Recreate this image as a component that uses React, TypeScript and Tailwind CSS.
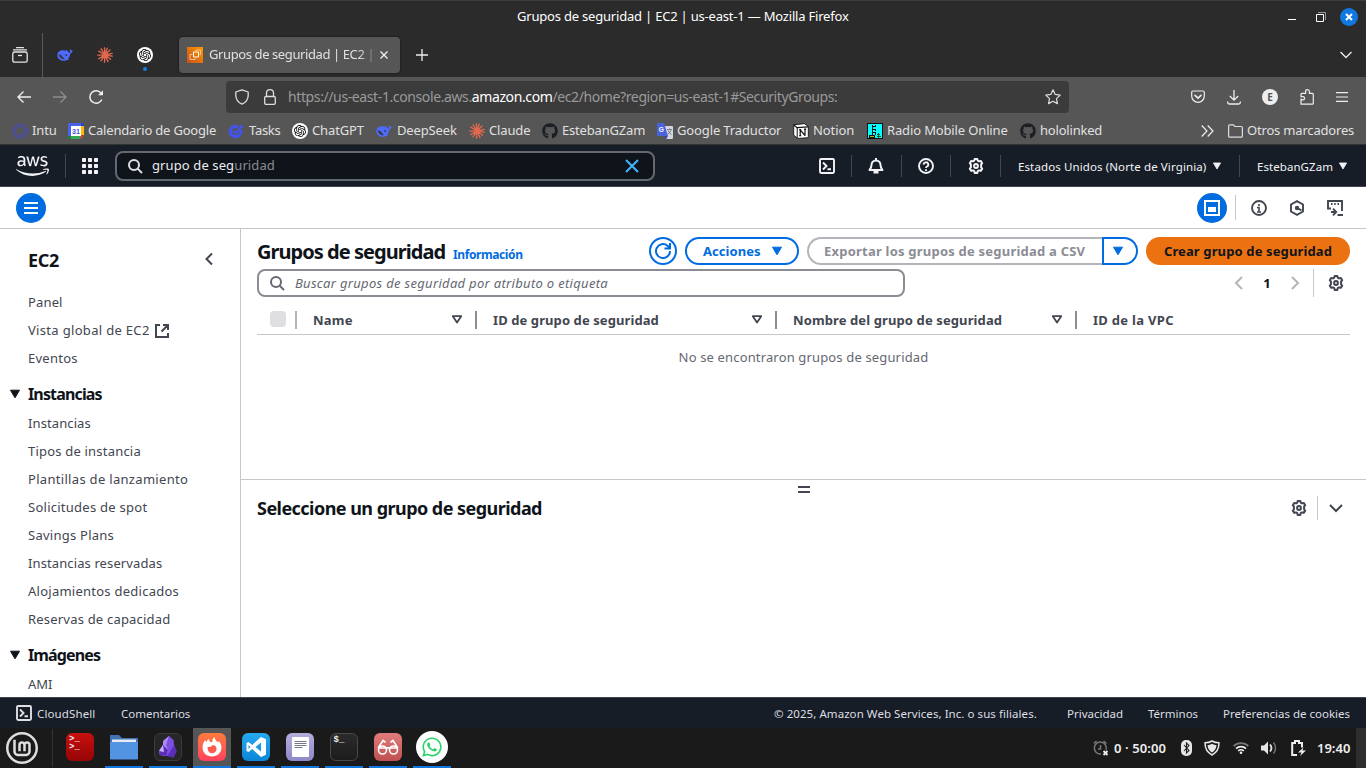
import React from 'react';
import { FaAws, FaGithub, FaWhatsapp } from 'react-icons/fa';
import { SiOpenai, SiLinuxmint } from 'react-icons/si';

type P = { className?: string };

const Whale = ({ className = '' }: P) => (
  <svg className={className} viewBox="0 0 16 16" fill="#4d6bfe">
    <path d="M15.6 3.2c-.7.5-1.300.3-1.800-.1-.5-.4-.6-1-.7-1.100-.4.400-.5 1.100-.3 1.900.2.700.5 1.200 1 1.600-.5.300-1 .3-1.500.1C10.900 4.500 9.700 2.900 8.700 2.800c-.2.400-.1.900.2 1.400-1-.7-2.500-1.200-4.300-.9C1.800 3.800.200 5.800.3 8.200c.2 3.300 2.800 5.400 5.900 5.600 1.500.100 2.600-.3 3.500-.9.9.3 1.700.2 2.100 0-.1-.4-.5-.7-1-.9 1.700-1.600 2.400-3.600 2.500-5.500 1.400-.2 2.300-1.400 2.300-3.300z" />
    <path d="M1.700 7.200c2.400 0 3.400 1.700 4.700 3.300.8 1 1.500 1.200 1.500 1.400-2.300.9-5.700-.7-6.200-4.700zM7.900 7c1.300-.4 2.400.5 2.500 2-.8.300-1.700-.1-2-.8-.2-.4-.2-.8-.5-1.200z" fill="#3b3b46" />
  </svg>
);

const Burst = ({ className = '' }: P) => (
  <svg className={className} viewBox="0 0 16 16" stroke="#e0694e" strokeWidth="1.35" strokeLinecap="round">
    <path d="M8 8L7.400.8M8 8l2.200-6.800M8 8l5-5M8 8l7.200-1.600M8 8l7.200 1.200M8 8l5.600 4.200M8 8l3 6.600M8 8l-.5 7.200M8 8l-4 5.800M8 8l-6.200 3.600M8 8L.8 8.200M8 8L1.800 4.200M8 8L4.200 1.800" />
  </svg>
);

const Ring = ({ className = '' }: P) => (
  <svg className={className} viewBox="0 0 16 16" fill="none" stroke="#4a4acb">
    <circle cx="8" cy="8" r="6.300" strokeWidth="3" strokeDasharray="0.9 1.080" />
    <circle cx="8" cy="8" r="4.500" strokeWidth=".6" />
  </svg>
);

const Calendar = ({ className = '' }: P) => (
  <svg className={className} viewBox="0 0 16 16">
    <path fill="#4a63e8" d="M0 1.500Q0 0 1.500 0H13v3H3v10H0z" />
    <path fill="#2846c8" d="M13 0h1.500Q16 0 16 1.500V3h-3z" />
    <path fill="#fbbc04" d="M13 3h3v9h-3z" />
    <path fill="#34a853" d="M3 13h9.500v3H3z" />
    <path fill="#188038" d="M0 13h3v3H1.500Q0 16 0 14.500z" />
    <path fill="#ea4335" d="M12.500 12.500H16L12.500 16z" />
    <path fill="#fff" d="M3 3h10v10H3z" />
    <text x="8" y="10.600" textAnchor="middle" fontFamily="Liberation Sans" fontWeight="700" fontSize="7" fill="#3c50e0">31</text>
  </svg>
);

const Tasks = ({ className = '' }: P) => (
  <svg className={className} viewBox="0 0 16 16" fill="none">
    <circle cx="7.500" cy="8.500" r="5.200" stroke="#4353f0" strokeWidth="3.200" />
    <path d="M9 8l5.500-6" stroke="#565656" strokeWidth="3.400" />
    <path d="M5 7.800l2.500 2.500L13 4" stroke="#4353f0" strokeWidth="2" />
    <circle cx="13.300" cy="3.400" r="1.600" fill="#4353f0" />
  </svg>
);

const Gpt = ({ className = '' }: P) => (
  <span className={`flex items-center justify-center rounded-full bg-white text-black ${className}`}>
    <SiOpenai size={12} />
  </span>
);

const Translate = ({ className = '' }: P) => (
  <svg className={className} viewBox="0 0 16 16">
    <path fill="#d5d7dc" d="M7 3h8q1 0 1 1v11q0 1-1 1H9.500z" />
    <path fill="#4a63dc" d="M1 0h6l4 13H1q-1 0-1-1V1q0-1 1-1z" />
    <path fill="#3a3fc0" d="M7.500 13H11l-2 3z" />
    <text x="1.800" y="8.700" fontFamily="Liberation Sans" fontWeight="700" fontSize="6.500" fill="#fff">G</text>
    <path stroke="#6d7a87" strokeWidth=".9" fill="none" d="M10 6.500h5M12.500 5.500v1M14 6.500q-.5 3-3.500 5M11 7.500q1 2.500 3.500 4" />
  </svg>
);

const Notion = ({ className = '' }: P) => (
  <svg className={className} viewBox="0 0 16 16">
    <path fill="#fff" stroke="#111" strokeWidth=".9" d="M.7 1.700L11.500.700l3.800 2.700v10.300q0 1-1 1.100l-9.800.600L.7 12z" />
    <path d="M.9 2l3.200 2.600 11-.8" stroke="#111" strokeWidth="1.200" fill="none" />
    <path d="M4.200 4.500v10.600" stroke="#111" strokeWidth="1" />
    <path d="M7.200 12.800V6.800M7 6.700l5 5.800M12 6.200v6.500M6.200 6.600h2M11 6.200h2.200M6.200 12.700h2" stroke="#111" strokeWidth="1.200" fill="none" />
  </svg>
);

const Radio = ({ className = '' }: P) => (
  <svg className={className} viewBox="0 0 16 16" shapeRendering="crispEdges">
    <path fill="#111" d="M0 0h16v16H0z" />
    <path fill="#0ff" d="M1 1h14v14H1z" />
    <path d="M5.500 2v10M8.500 2v2M8.500 6v2M8.500 9v3M5 3.500h4M5 6.500h4M5 9.500h4" stroke="#111" fill="none" />
    <path d="M2.500 12.500h5v2h-5z" fill="#c8b820" stroke="#111" />
    <path d="M11.500 10v5M10 11.500h3M10 13.500h4" stroke="#175c17" />
  </svg>
);

const Git = ({ className = '' }: P) => <FaGithub className={`text-[#1b1f23] ${className}`} />;

const Gear = ({ className = '', sw = 2 }: P & { sw?: number }) => (
  <svg className={className} viewBox="0 0 16 16" fill="none" stroke="currentColor" strokeWidth={sw} strokeLinejoin="round">
    <path d="M6.300 2.600L6.700 1h2.600l.4 1.600 1.300.8 1.700-.5 1.500 2.300-1.100 1.300v2.800l1.100 1.300-1.500 2.300-1.700-.5-1.300.8L9.300 15H6.700l-.4-1.800-1.300-.8-1.700.5-1.500-2.300 1.100-1.300V6.500L1.800 5.200l1.500-2.300 1.700.5z" />
    <circle cx="8" cy="8" r="1.900" />
  </svg>
);

const Search = ({ className = '' }: P) => (
  <svg className={className} viewBox="0 0 16 16" fill="none" stroke="currentColor" strokeWidth="2">
    <circle cx="7" cy="7" r="5" />
    <path d="M10.600 10.600L15 15" />
  </svg>
);

const Shell = ({ className = '' }: P) => (
  <svg className={className} viewBox="0 0 16 16" fill="none" stroke="currentColor" strokeWidth="1.900">
    <rect x="1" y="1" width="14" height="14" rx="1.200" />
    <path d="M4 4.500L7.500 8 4 11.500M8.500 11.300H12" />
  </svg>
);

const Tri = ({ className = '' }: P) => (
  <svg className={className} viewBox="0 0 12 10" fill="currentColor" stroke="currentColor" strokeLinejoin="round">
    <path d="M1.500 1.200h9L6 8.800z" />
  </svg>
);

const Chevron = ({ className = '', d = 'M11 2L5 8l6 6' }: P & { d?: string }) => (
  <svg className={className} viewBox="0 0 16 16" fill="none" stroke="currentColor" strokeWidth="2">
    <path d={d} />
  </svg>
);

const bookmarks: { label: string; w: string; t: string; Icon: React.ComponentType<P> }[] = [
  { label: 'Intu', w: 'w-[56px]', t: 'tracking-[-0.1px]', Icon: Ring },
  { label: 'Calendario de Google', w: 'w-[160px]', t: 'tracking-[-0.2px]', Icon: Calendar },
  { label: 'Tasks', w: 'w-[64px]', t: 'tracking-[-0.3px] pl-px', Icon: Tasks },
  { label: 'ChatGPT', w: 'w-[84px]', t: 'tracking-[-0.13px]', Icon: Gpt },
  { label: 'DeepSeek', w: 'w-[93px]', t: 'tracking-[-0.15px] pl-px', Icon: Whale },
  { label: 'Claude', w: 'w-[73px]', t: 'tracking-[-0.15px]', Icon: Burst },
  { label: 'EstebanGZam', w: 'w-[115px]', t: 'tracking-[-0.18px]', Icon: Git },
  { label: 'Google Traductor', w: 'w-[136px]', t: 'tracking-[-0.13px]', Icon: Translate },
  { label: 'Notion', w: 'w-[74px]', t: 'tracking-[-0.1px]', Icon: Notion },
  { label: 'Radio Mobile Online', w: 'w-[153px]', t: 'tracking-[-0.14px]', Icon: Radio },
  { label: 'hololinked', w: 'w-[90px]', t: 'tracking-[-0.2px]', Icon: Git },
];

function Browser() {
  return (
    <div className="h-[145px] shrink-0 text-[#e0e0e0]">
      <div className="flex h-8 items-center border-t border-[#3c3c3c] bg-[#2b2b2b]">
        <div className="w-[517px]" />
        <span className="w-[340px] whitespace-nowrap text-[13px] tracking-[-0.2px] text-white">Grupos de seguridad | EC2 | us-east-1 — Mozilla Firefox</span>
        <div className="flex-1" />
        <svg className="mr-[19px] h-4 w-[9px]" viewBox="0 0 9 16"><path d="M0 10.500h8" stroke="#fff" /></svg>
        <svg className="mr-[14px] h-[10px] w-[10px]" viewBox="0 0 10 10" fill="none"><path d="M.5 2.500h7v7h-7z" stroke="#fff" /><path d="M2 .5h7.500V8" stroke="#999" /></svg>
        <div className="mr-2 flex h-[18px] w-[18px] items-center justify-center rounded-full bg-[#1178e0]">
          <svg className="h-2 w-2" viewBox="0 0 8 8"><path d="M1 1l6 6M7 1L1 7" stroke="#fff" strokeWidth="2" /></svg>
        </div>
      </div>
      <div className="flex h-[45px] items-center bg-[#2b2b2b]">
        <svg className="ml-3 h-4 w-4" viewBox="0 0 16 16" fill="none" stroke="#e6e6e6" strokeWidth="1.300">
          <path d="M4.500.7h7M1.500 2.900h13" strokeLinecap="round" /><rect x=".8" y="5" width="14.400" height="10.200" rx="1.800" /><path d="M6 8.500h4" />
        </svg>
        <div className="ml-[14px] h-11 w-px bg-[#5a5a5a]" />
        <Whale className="ml-[14px] h-4 w-4" />
        <Burst className="ml-6 h-4 w-4" />
        <div className="relative ml-6">
          <Gpt className="h-4 w-4" />
          <i className="absolute left-[6px] top-[20px] h-1 w-1 rounded-full bg-[#1080e8]" />
        </div>
        <div className="ml-[26px] flex h-9 w-[221px] items-center rounded bg-[#565656] pl-2 shadow-[0_0_2px_#111]">
          <svg className="h-4 w-4 shrink-0" viewBox="0 0 16 16" fill="none">
            <defs><linearGradient id="ec2" x1="0" y1="1" x2="1" y2="0"><stop stopColor="#c8511b" /><stop offset="1" stopColor="#f90" /></linearGradient></defs>
            <path d="M0 0h16v16H0z" fill="url(#ec2)" />
            <path d="M6.500 5h5v5h-5z" stroke="#fff" /><path d="M5.500 7.500H3v5h5V11M9 4V3h4.500v4.500H12.500" stroke="#fbd3a6" strokeWidth=".8" />
          </svg>
          <div className="ml-[6px] w-[168px] overflow-hidden whitespace-nowrap text-[13px] tracking-[-0.4px] [mask-image:linear-gradient(to_right,#000_150px,transparent_169px)]">Grupos de seguridad | EC2 | us-east-1</div>
          <svg className="ml-[3px] h-2 w-2" viewBox="0 0 8 8"><path d="M.5.5l7 7M7.500.5l-7 7" stroke="#eee" strokeWidth="1.400" /></svg>
        </div>
        <svg className="ml-4 h-3 w-3" viewBox="0 0 12 12"><path d="M6 0v12M0 6h12" stroke="#eee" strokeWidth="1.300" /></svg>
        <div className="flex-1" />
        <svg className="mr-[14px] h-3 w-3" viewBox="0 0 12 12" fill="none"><path d="M.5 3L6 8.500 11.500 3" stroke="#eee" strokeWidth="1.300" /></svg>
      </div>
      <div className="flex h-10 items-center bg-[#565656]">
        <svg className="ml-[17px] h-[14px] w-[14px]" viewBox="0 0 14 14" fill="none" stroke="#eee" strokeWidth="1.400"><path d="M14 7H1M6.500 1.500L1 7l5.500 5.500" /></svg>
        <svg className="ml-[22px] h-[14px] w-[14px]" viewBox="0 0 14 14" fill="none" stroke="#8c8c8c" strokeWidth="1.400"><path d="M0 7h13M7.500 1.500L13 7l-5.500 5.500" /></svg>
        <svg className="ml-[22px] h-[14px] w-[15px]" viewBox="0 0 15 14" fill="none" stroke="#eee" strokeWidth="1.500"><path d="M12.800 9.500A6.200 6.200 0 1 1 12 3.200" /><path d="M14 .2v5H9z" fill="#eee" stroke="none" /></svg>
        <div className="ml-[122px] flex h-8 w-[843px] items-center rounded bg-[#3b3b3b]">
          <svg className="ml-[9px] h-4 w-[14px]" viewBox="0 0 14 16" fill="none" stroke="#ddd" strokeWidth="1.300"><path d="M7 .8L13.200 3v3.500q-.2 6-6.200 8.700Q1 12.500.8 6.500V3z" strokeLinejoin="round" /></svg>
          <svg className="ml-[15px] h-4 w-3" viewBox="0 0 12 16" fill="none" stroke="#ddd" strokeWidth="1.300"><rect x=".7" y="7.500" width="10.600" height="7.800" rx="1.300" /><path d="M2.500 7.500V4a3.500 3.300 0 0 1 7 0v3.500" /></svg>
          <span className="ml-3 mb-px text-[14px] tracking-[-0.39px] text-[#9a9a9a]">https://us-east-1.console.aws.<b className="font-normal text-white">amazon.com</b>/ec2/home?region=us-east-1#SecurityGroups:</span>
          <div className="flex-1" />
          <svg className="mr-2 h-4 w-4" viewBox="0 0 16 16" fill="none" stroke="#ddd" strokeWidth="1.200" strokeLinejoin="round"><path d="M8 .8l2.200 4.600 5 .7-3.700 3.500.9 5L8 12.200l-4.400 2.400.9-5L.8 6.100l5-.7z" /></svg>
        </div>
        <div className="flex-1" />
        <div className="mr-[18px] flex items-center text-[#eee]">
          <svg className="h-[14px] w-[14px]" viewBox="0 0 14 14" fill="none" stroke="currentColor" strokeWidth="1.200"><path d="M2 1h10q1.300 0 1.300 1.300V6a6.300 6.300 0 0 1-12.600 0V2.300Q.7 1 2 1z" /><path d="M4 5.300l3 2.900 3-2.900" strokeWidth="1.600" strokeLinecap="round" /></svg>
          <svg className="ml-[22px] h-[15px] w-[14px]" viewBox="0 0 14 15" fill="none" stroke="currentColor" strokeWidth="1.300"><path d="M7 0v10M2.800 6L7 10.200 11.200 6M.7 11.500v1q0 1.500 1.500 1.500h9.600q1.500 0 1.500-1.500v-1" /></svg>
          <div className="ml-[21px] flex h-4 w-4 items-center justify-center rounded-full bg-[#eee] text-[10px] font-bold text-[#555]">E</div>
          <svg className="ml-[22px] h-4 w-[14px]" viewBox="0 0 14 16" fill="none" stroke="currentColor" strokeWidth="1.200" strokeLinejoin="round"><path d="M1 9.500V15.200h11.300q1 0 1-1V5.400q0-1-1-1H9.400V2.500a1.900 1.900 0 0 0-3.800 0V4.400H2q-1 0-1 1V7.600h2a1.200 1.200 0 0 1 0 3.200H1" /></svg>
          <svg className="ml-[22px] h-[10px] w-3" viewBox="0 0 12 10"><path d="M0 .6h12M0 5h12M0 9.400h12" stroke="#eee" strokeWidth="1.200" /></svg>
        </div>
      </div>
      <div className="flex h-7 items-center border-b border-[#333] bg-[#565656] pl-3 text-[13px]">
        {bookmarks.map(({ label, w, t, Icon }, i) => (
          <div key={i} className={`flex shrink-0 items-center ${w}`}>
            <Icon className="h-4 w-4 shrink-0" />
            <span className={`ml-1 whitespace-nowrap pt-px ${t}`}>{label}</span>
          </div>
        ))}
        <div className="flex-1" />
        <svg className="h-3 w-[13px]" viewBox="0 0 13 12" fill="none" stroke="#eee" strokeWidth="1.200"><path d="M.7.500L6 6 .7 11.500M6.700.500L12 6l-5.300 5.500" /></svg>
        <svg className="ml-[14px] h-[14px] w-[15px]" viewBox="0 0 15 14" fill="none" stroke="#ddd" strokeWidth="1.200"><path d="M.6 11.900V2.100Q.6.800 1.900.800h3.500l1.500 1.700h6.200q1.300 0 1.300 1.300v8.100q0 1.300-1.300 1.300H1.900Q.6 13.200.6 11.900z" /></svg>
        <span className="ml-1 w-[119px] whitespace-nowrap pt-px tracking-[-0.18px]">Otros marcadores</span>
      </div>
    </div>
  );
}

function AwsHeader() {
  return (
    <header className="flex h-[42px] shrink-0 items-center border-b border-[#424650] bg-[#161d26] text-[#f3f3f7]">
      <FaAws className="ml-4 h-8 w-[33px]" />
      <div className="ml-4 h-6 w-px bg-[#424650]" />
      <svg className="ml-4 h-4 w-4" viewBox="0 0 16 16" fill="currentColor">
        {[0, 6, 12].map((y) => [0, 6, 12].map((x) => <rect key={`${x}-${y}`} x={x} y={y} width="4" height="4" rx=".7" />))}
      </svg>
      <div className="ml-[17px] flex h-[30px] w-[540px] items-center rounded-lg border-2 border-[#656871] bg-[#0f141a]">
        <Search className="ml-[10px] h-4 w-4 text-[#dedee3]" />
        <span className="ml-[9px] whitespace-nowrap text-[13px] tracking-[0.11px] text-[#ebebf0]">grupo de seg<i className="not-italic text-[#8c8c94]">uridad</i></span>
        <div className="flex-1" />
        <svg className="mr-[14px] h-[14px] w-[14px]" viewBox="0 0 14 14"><path d="M1 1l12 12M13 1L1 13" stroke="#42b4ff" strokeWidth="2" /></svg>
      </div>
      <div className="w-[164px]" />
      <Shell className="h-4 w-4" />
      <div className="ml-4 h-[22px] w-px bg-[#424650]" />
      <svg className="ml-4 h-4 w-4" viewBox="0 0 16 16" fill="none" stroke="currentColor" strokeWidth="2"><path d="M8 0v2M3.500 7a4.500 4.500 0 0 1 9 0c0 2.500.8 3.500 2 5H1.500c1.200-1.500 2-2.500 2-5z" strokeLinejoin="round" /><path d="M5.500 14h5" strokeWidth="3" /></svg>
      <div className="ml-[17px] h-[22px] w-px bg-[#424650]" />
      <svg className="ml-4 h-4 w-4" viewBox="0 0 16 16" fill="none" stroke="currentColor" strokeWidth="1.900"><circle cx="8" cy="8" r="7" /><path d="M5.700 6.700a2.300 2.200 0 1 1 3.300 1.800Q8 9 8 10M8 11.200V13" /></svg>
      <div className="ml-4 h-[22px] w-px bg-[#424650]" />
      <Gear className="ml-[17px] h-4 w-4" />
      <div className="ml-4 h-[22px] w-px bg-[#424650]" />
      <span className="ml-[17px] w-[194px] whitespace-nowrap pt-[2px] text-[11.500px] tracking-[0.11px]">Estados Unidos (Norte de Virginia)</span>
      <Tri className="h-2 w-[10px]" />
      <div className="ml-[17px] h-[22px] w-px bg-[#424650]" />
      <span className="ml-[17px] w-[81px] whitespace-nowrap pt-[2px] text-[11.500px] tracking-[0.06px]">EstebanGZam</span>
      <Tri className="h-2 w-[10px]" />
    </header>
  );
}

const links: [string, string][] = [
  ['Instancias', 'tracking-[0.1px]'],
  ['Tipos de instancia', 'tracking-[0.2px]'],
  ['Plantillas de lanzamiento', 'tracking-[0.31px]'],
  ['Solicitudes de spot', 'tracking-[0.26px]'],
  ['Savings Plans', 'tracking-[0.25px]'],
  ['Instancias reservadas', 'tracking-[0.11px]'],
  ['Alojamientos dedicados', 'tracking-[0.25px]'],
  ['Reservas de capacidad', 'tracking-[0.2px]'],
];

function Sidebar() {
  const item = 'flex h-7 items-center pl-7 text-[13px] text-[#424650]';
  return (
    <nav className="w-[241px] shrink-0 overflow-hidden border-r border-[#c6c6cd] bg-white">
      <div className="flex h-[60px] items-center pl-7 pr-[23px] pt-[2px]">
        <b className="flex-1 text-[18px] tracking-[-0.3px] text-[#0f141a]">EC2</b>
        <Chevron className="mb-[2px] h-4 w-4 text-[#424650]" d="M11 2.500L5.500 8l5.500 5.500" />
      </div>
      <div className={`${item} tracking-[0.15px]`}>Panel</div>
      <div className={`${item} tracking-[0.32px]`}>
        Vista global de EC2
        <svg className="ml-[5px] h-[14px] w-[14px]" viewBox="0 0 14 14" fill="none" stroke="#424650" strokeWidth="2"><path d="M5 1H1v12h12V9M8 1h5v5M13 1L6.500 7.500" /></svg>
      </div>
      <div className={`${item} tracking-[0.25px]`}>Eventos</div>
      <Group title="Instancias" />
      {links.map(([s, t]) => (
        <div key={s} className={`${item} ${t}`}>{s}</div>
      ))}
      <Group title="Imágenes" />
      <div className={item}>AMI</div>
    </nav>
  );
}

const Group = ({ title }: { title: string }) => (
  <div className="flex h-[37px] items-center pl-[9px] pt-[7px]">
    <Tri className="mb-[2px] h-[10px] w-3 text-[#0f141a]" />
    <b className="mb-[2px] ml-[7px] text-[16px] tracking-[-0.85px] text-[#0f141a]">{title}</b>
  </div>
);

const Filter = () => (
  <svg className="h-[9px] w-3 shrink-0" viewBox="0 0 12 9" fill="none"><path d="M1.800 1.200h8.400L6 7.500z" stroke="#424650" strokeWidth="1.800" strokeLinejoin="round" /></svg>
);

function Main() {
  return (
    <main className="flex min-w-0 flex-1 flex-col bg-white pl-4">
      <div className="flex h-10 items-center pr-4 pt-1">
        <b className="w-[196px] whitespace-nowrap pt-[2px] text-[20px] tracking-[-0.96px] text-[#0f141a]">Grupos de seguridad</b>
        <b className="mt-2 whitespace-nowrap text-[12px] tracking-[-0.4px] text-[#006ce0]">Información</b>
        <div className="flex-1" />
        <div className="flex h-7 w-7 items-center justify-center rounded-full border-2 border-[#006ce0]">
          <svg className="h-4 w-4" viewBox="0 0 16 16" fill="none" stroke="#006ce0" strokeWidth="2"><path d="M15 8A7 7 0 1 1 12.500 2.700L15 5M15 0v5.500H9.500" /></svg>
        </div>
        <div className="ml-2 flex h-7 w-[114px] items-center rounded-full border-2 border-[#006ce0] pl-4 text-[#006ce0]">
          <b className="w-[68px] pt-px text-[13px] tracking-[0.06px]">Acciones</b>
          <Tri className="h-[10px] w-3" />
        </div>
        <div className="ml-2 flex h-7 w-[295px] items-center rounded-l-full border-2 border-r-0 border-[#b4b4bb] pl-[15px]">
          <b className="whitespace-nowrap pt-px text-[13px] tracking-[0.22px] text-[#8c8c94]">Exportar los grupos de seguridad a CSV</b>
        </div>
        <div className="flex h-7 w-9 items-center rounded-r-full border-2 border-[#006ce0] pl-2 text-[#006ce0]">
          <Tri className="h-[10px] w-3" />
        </div>
        <div className="ml-2 flex h-7 w-[204px] items-center justify-center rounded-full bg-[#ec7211]">
          <b className="whitespace-nowrap pt-px text-[13px] tracking-[0.13px] text-[#0f141a]">Crear grupo de seguridad</b>
        </div>
      </div>
      <div className="flex h-[28px] items-center">
        <div className="flex h-7 w-[648px] items-center rounded-lg border-2 border-[#8c8c94] pl-[10px]">
          <Search className="h-4 w-4 text-[#656871]" />
          <i className="ml-[10px] whitespace-nowrap pt-px text-[13px] tracking-[0.31px] text-[#656871]">Buscar grupos de seguridad por atributo o etiqueta</i>
        </div>
        <div className="flex-1" />
        <Chevron className="h-4 w-4 text-[#b4b4bb]" />
        <b className="w-10 pt-px text-center text-[13px] text-[#0f141a]">1</b>
        <Chevron className="h-4 w-4 text-[#b4b4bb]" d="M5 2l6 6-6 6" />
        <div className="ml-[10px] h-7 w-px bg-[#c6c6cd]" />
        <Gear className="ml-[14px] mr-[22px] h-4 w-4 text-[#424650]" />
      </div>
      <div className="mr-4 flex h-[38px] items-center border-b border-[#c6c6cd] pt-2 text-[13px] text-[#424650]">
        <div className="mb-[2px] ml-[13px] h-4 w-4 rounded-sm bg-[#dedee3]" />
        <div className="ml-[9px] h-[18px] w-[2px] bg-[#b4b4bb]" />
        <b className="ml-4 w-[138px] pt-[2px] tracking-[0.2px]">Name</b><Filter />
        <div className="ml-3 h-[18px] w-[2px] bg-[#8c8c94]" />
        <b className="ml-4 w-[258px] pt-[2px] tracking-[0.09px]">ID de grupo de seguridad</b><Filter />
        <div className="ml-3 h-[18px] w-[2px] bg-[#8c8c94]" />
        <b className="ml-4 w-[258px] pt-[2px] tracking-[0.11px]">Nombre del grupo de seguridad</b><Filter />
        <div className="ml-3 h-[18px] w-[2px] bg-[#8c8c94]" />
        <b className="ml-4 pt-[2px] tracking-[0.3px]">ID de la VPC</b>
      </div>
      <div className="mr-4 flex h-[144px] justify-center pt-[13px] text-[13px] tracking-[0.15px] text-[#656871]">No se encontraron grupos de seguridad</div>
      <section className="-ml-4 flex-1 border-t border-[#c6c6cd] pl-4">
        <div className="flex h-[15px] items-end justify-center pb-px pr-4">
          <svg className="h-2 w-3" viewBox="0 0 12 8"><path d="M0 1h12M0 6h12" stroke="#424650" strokeWidth="2" /></svg>
        </div>
        <div className="flex h-[26px] items-center pr-[22px]">
          <b className="flex-1 text-[18px] tracking-[-0.54px] text-[#0f141a]">Seleccione un grupo de seguridad</b>
          <Gear className="h-4 w-4 text-[#424650]" />
          <div className="ml-[10px] h-6 w-px bg-[#c6c6cd]" />
          <Chevron className="ml-[10px] h-4 w-4 text-[#424650]" d="M2 5l6 6 6-6" />
        </div>
      </section>
    </main>
  );
}

const Tile = ({ bg, on = true, active = false, children }: { bg: string; on?: boolean; active?: boolean; children: React.ReactNode }) => (
  <div className={`mr-[6px] flex h-10 w-[38px] flex-col items-center ${active ? 'bg-[#565656]' : ''}`}>
    <div className={`mt-[5px] flex h-7 w-7 shrink-0 items-center justify-center rounded-md ${bg}`}>{children}</div>
    <div className="flex-1" />
    {on && <div className="h-[2px] w-full bg-[#1178e0]" />}
  </div>
);

function Taskbar() {
  return (
    <div className="flex h-10 shrink-0 items-center bg-[#1a1a1a] pl-[6px] text-[#eee]">
      <SiLinuxmint className="h-8 w-8 text-[#dedede]" />
      <div className="ml-[14px] h-[38px] w-px bg-[#333]" />
      <div className="ml-2 flex">
        <Tile on={false} bg="bg-linear-to-b from-[#c80f0f] to-[#960505]">
          <span className="h-6 w-[22px] font-['Liberation_Mono',monospace] text-[9px] font-bold leading-[8px]">&gt;_<br />&gt;_</span>
        </Tile>
        <Tile bg="">
          <svg className="h-7 w-7" viewBox="0 0 28 28"><path d="M0 2h9l3 3h16v8H0z" fill="#4272b2" /><path d="M2 6.500h24V12H2z" fill="#e9edf2" /><path d="M0 9h28v16.500q0 1-1 1H1q-1 0-1-1z" fill="#5294e2" /></svg>
        </Tile>
        <Tile bg="bg-[#262626] border border-[#3a3a3a]">
          <svg className="h-[22px] w-[18px]" viewBox="0 0 18 22"><path d="M10 0l4.500 4 .5 5 2.500 6-3 6.500-6-1.500L1 19 0 15l4-6V5z" fill="#7c4fe0" /><path d="M10 0L7 9l2 5-1.500 6L1 19 0 15l4-6V5z" fill="#a98af5" /><path d="M4 9l5 5-1.500 6L1 19 0 15zM15 9l2.500 6-3 6.500-6-1.500z" fill="#5b2db8" /><path d="M4 9L0 15l5 1z" fill="#c6b2ff" /></svg>
        </Tile>
        <Tile active bg="bg-linear-to-b from-[#ff7a3a] to-[#ff3f5e]">
          <svg className="h-5 w-5" viewBox="0 0 20 20"><path d="M10 19.500C4.500 19.500.5 15.500.5 10.500.5 7 2 4.500 3.500 3c0 1 .4 1.600.8 2C5 3.500 5.500 2.800 7 2c0 1.500.5 2.200 1.500 3h2c-.500-2 .3-4 2-5 0 2.500 2 3.500 3.500 5.500l.8-1.500C18.500 6 19.500 8 19.500 10.500c0 5-4 9-9.500 9z" fill="#fff" /><path d="M5.500 10l3.500-.3 1.500-1.700c3 .3 4 2 4 3.800a4.300 4.300 0 0 1-8.800.2c-.1-.7-.2-1.300-.2-2z" fill="#ff5a4e" /></svg>
        </Tile>
        <Tile bg="bg-linear-to-b from-[#26aaf0] to-[#0b86d8]">
          <svg className="h-[22px] w-[22px]" viewBox="0 0 22 22"><path d="M16 1l5 2.200v15.600L16 21 7.200 13 3.500 16 1.500 15V7l2-1L7.200 9zM16 6.500L10.500 11l5.500 4.500zM3.500 9v4l2-2z" fill="#fff" fillRule="evenodd" /></svg>
        </Tile>
        <Tile bg="bg-linear-to-b from-[#b4aedc] to-[#8d88c8]">
          <svg className="h-5 w-[17px]" viewBox="0 0 17 20"><rect width="17" height="20" rx="1" fill="#fff" /><path d="M2.500 4.500h12M2.500 6.500h12M2.500 8.500h12M2.500 10.500h8" stroke="#667" strokeWidth=".9" /></svg>
        </Tile>
        <Tile bg="bg-linear-to-b from-[#2b2b2b] to-[#1c1c1c] border border-[#484848]">
          <span className="h-[22px] w-[21px] font-['Liberation_Mono',monospace] text-[9px] font-bold leading-[9px]">$_</span>
        </Tile>
        <Tile bg="bg-linear-to-b from-[#e27c7c] to-[#be5050]">
          <svg className="h-4 w-[22px]" viewBox="0 0 22 16" fill="none" stroke="#fff" strokeWidth="1.600" strokeLinecap="round"><path d="M1.500 8.500L6 1.500l2 1.500M20.500 8.500L16 1.500 14 3M9.500 9.500q1.500-1.500 3 0" /><circle cx="5.500" cy="11" r="4" /><circle cx="16.500" cy="11" r="4" /><path d="M2 9h7.500M12.500 9H20" /></svg>
        </Tile>
        <div className="flex h-10 w-[38px] flex-col items-center">
          <div className="mt-[3px] flex h-8 w-8 shrink-0 items-center justify-center rounded-full bg-white text-[#25d366]"><FaWhatsapp size={22} /></div>
          <div className="flex-1" /><div className="h-[2px] w-full bg-[#1178e0]" />
        </div>
      </div>
      <div className="flex-1" />
      <svg className="h-4 w-4" viewBox="0 0 16 16" fill="none" stroke="#777" strokeWidth="1.500"><path d="M13 10A6 6 0 1 0 8 14M7.500 5v4H5M.8 3.500L3.500 1M10.500 1l3 2.500" /><path d="M10.500 11l4 4M14.500 11l-4 4" stroke="#eee" strokeWidth="1.800" /></svg>
      <span className="ml-[5px] w-[67px] whitespace-nowrap pt-[2px] text-[13px] font-semibold tracking-[0.1px]">0 · 50:00</span>
      <svg className="h-4 w-[11px]" viewBox="0 0 11 16"><rect width="11" height="16" rx="5" fill="#e6e6e6" /><path d="M3 5l5 5.500L5.500 13V3L8 5.500 3 11" fill="none" stroke="#1a1a1a" strokeWidth="1.100" /></svg>
      <svg className="ml-3 h-4 w-4" viewBox="0 0 16 16" fill="none"><path d="M8 1q3 1.800 7 1.800Q15 11.500 8 15 1 11.500 1 2.800 5 2.800 8 1z" stroke="#e6e6e6" strokeWidth="1.500" /><path d="M8 3.800q2 1.200 4.500 1.400Q12 10 8 12.500 4 10 3.500 5.200 6 5 8 3.800z" fill="#e6e6e6" /></svg>
      <svg className="ml-[13px] h-3 w-4" viewBox="0 0 16 12" fill="none" strokeWidth="1.700"><path d="M.6 4.200a10.500 10.500 0 0 1 14.800 0" stroke="#777" /><path d="M3 6.700a7 7 0 0 1 10 0M5.200 9a4 4 0 0 1 5.600 0" stroke="#eee" /><circle cx="8" cy="10.700" r="1.300" fill="#eee" /></svg>
      <svg className="ml-3 h-[14px] w-4" viewBox="0 0 16 14" fill="none"><path d="M0 4.500h3L7 .500v13l-4-4H0z" fill="#e6e6e6" /><path d="M9 3.500q3 3.500 0 7" stroke="#e6e6e6" strokeWidth="1.800" /><path d="M12.500 1.500q4 5.500 0 11" stroke="#777" strokeWidth="1.400" /></svg>
      <svg className="ml-[14px] h-4 w-[15px]" viewBox="0 0 15 16" fill="none"><path d="M6 15H1.200V3H4V1h4v2h3v4.500" stroke="#eee" strokeWidth="2" /><path d="M12.500 7.500L7 12.500h3.500L9 16l6-5.500h-3.500z" fill="#eee" /></svg>
      <span className="ml-[11px] w-[39px] whitespace-nowrap pt-[2px] text-[13px] font-semibold">19:40</span>
      <div className="h-10 w-[10px] bg-[#2e2e2e]" />
    </div>
  );
}

export default function App() {
  return (
    <div className="flex h-[768px] w-[1366px] flex-col overflow-hidden bg-white font-['Noto_Sans',sans-serif]">
      <Browser />
      <AwsHeader />
      <div className="flex h-[42px] shrink-0 items-center border-b border-[#c6c6cd]">
        <div className="ml-4 flex h-[30px] w-[30px] items-center justify-center rounded-full bg-[#006ce0]">
          <svg className="h-3 w-[14px]" viewBox="0 0 14 12"><path d="M0 1h14M0 6h14M0 11h14" stroke="#fff" strokeWidth="2" /></svg>
        </div>
        <div className="flex-1" />
        <div className="flex h-[30px] w-[30px] items-center justify-center rounded-full bg-[#006ce0]">
          <svg className="h-4 w-4" viewBox="0 0 16 16" fill="none"><path d="M1 1h14v14H1z" stroke="#fff" strokeWidth="2" /><path d="M4 7h8v5H4z" fill="#fff" /></svg>
        </div>
        <div className="ml-2 h-[25px] w-px bg-[#c6c6cd]" />
        <div className="ml-[15px] mr-[23px] flex text-[#424650]">
          <svg className="h-4 w-4" viewBox="0 0 16 16" fill="none" stroke="currentColor" strokeWidth="1.900"><circle cx="8" cy="8" r="7" /><path d="M8 4v2M6 7.500h2V12M6 12h4" strokeWidth="1.600" /></svg>
          <svg className="ml-[22px] h-4 w-4" viewBox="0 0 16 16" fill="none" stroke="currentColor" strokeWidth="1.900"><path d="M8 1.100l6 3.400v7l-6 3.400-6-3.400v-7z" /><circle cx="8" cy="8" r="2.200" fill="currentColor" stroke="none" /><path d="M8.500 8l4 2.500" /></svg>
          <svg className="ml-[22px] h-4 w-4" viewBox="0 0 16 16" fill="none" stroke="currentColor" strokeWidth="1.900"><path d="M4 8.500H1V1h14v10M4 4h1.500M7.200 4h1.500M10.500 4H12M4 12h5M6 8.700L9.200 12 6 15.300M10.500 15H16" /></svg>
        </div>
      </div>
      <div className="flex h-[468px] shrink-0">
        <Sidebar />
        <Main />
      </div>
      <footer className="flex h-[31px] shrink-0 items-center border-t border-[#424650] bg-[#161d26] text-[11.500px] text-[#dedee3]">
        <Shell className="ml-4 h-4 w-4" />
        <span className="ml-[5px] w-[84px] pt-px tracking-[0.12px]">CloudShell</span>
        <span className="pt-px">Comentarios</span>
        <div className="flex-1" />
        <span className="w-[293px] whitespace-nowrap pt-px tracking-[0.06px]">© 2025, Amazon Web Services, Inc. o sus filiales.</span>
        <span className="w-[81px] pt-px">Privacidad</span>
        <span className="w-[75px] pt-px">Términos</span>
        <span className="w-[143px] whitespace-nowrap pt-px">Preferencias de cookies</span>
      </footer>
      <Taskbar />
    </div>
  );
}
